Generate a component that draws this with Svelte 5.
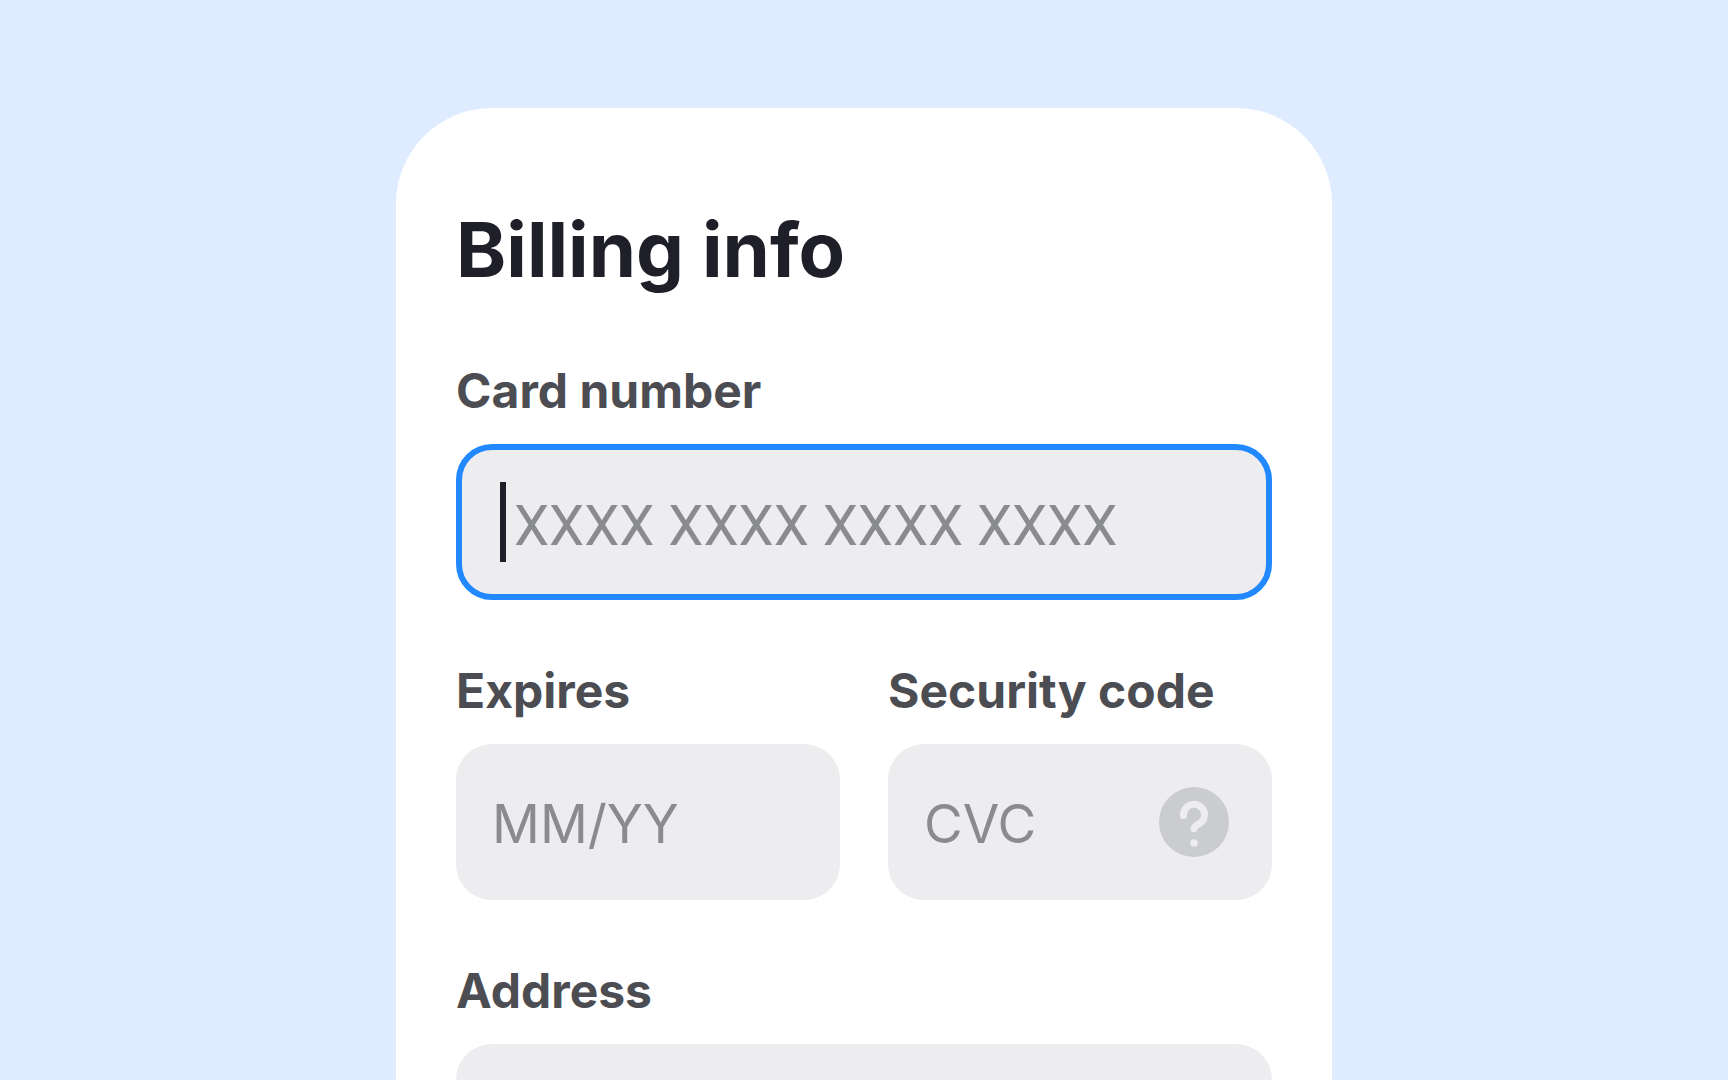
<script>
    let cardNumber = '';
    let expires = '';
    let securityCode = '';
    let address = '';
</script>

<style>
    :global(body) {
        background-color: #dfecff;
    }

    .page {
        box-sizing: border-box;
        height: 100vh;
        padding: 108px 24px 0;
        overflow: hidden;
        font-family: Inter, "Liberation Sans", sans-serif;
    }

    .card {
        box-sizing: border-box;
        max-width: 936px;
        margin: 0 auto;
        padding: 96px 60px;
        border-radius: 96px;
        background-color: #fff;
    }

    h1 {
        margin: 0 0 66px;
        font-size: 76px;
        line-height: 90px;
        font-weight: 700;
        color: #1f1f29;
    }

    form {
        display: flex;
        flex-direction: column;
        gap: 60px;
    }

    .row {
        display: grid;
        grid-template-columns: 1fr 1fr;
        gap: 48px;
    }

    .field {
        min-width: 0;
    }

    label {
        display: block;
        margin-bottom: 22px;
        font-size: 48px;
        line-height: 62px;
        font-weight: 700;
        color: #4c4d53;
    }

    .control {
        box-sizing: border-box;
        display: flex;
        align-items: center;
        height: 156px;
        padding: 0 37px 0 30px;
        border: 6px solid #ededef;
        border-radius: 36px;
        background-color: #ededef;
    }

    .control.active {
        padding-left: 38px;
        border-color: #2288ff;
    }

    .caret {
        flex: none;
        width: 6px;
        height: 80px;
        margin-right: 8px;
        background-color: #1f1f29;
    }

    input {
        flex: 1;
        min-width: 0;
        padding: 4px 0 0;
        border: none;
        outline: none;
        background: none;
        font-family: inherit;
        font-size: 53px;
        line-height: 72px;
        font-weight: 400;
        color: #1f1f29;
    }

    input::placeholder {
        color: #8a8b8e;
        opacity: 1;
    }

    #card-number {
        padding-top: 8px;
        font-family: Roboto, sans-serif;
        font-size: 56px;
    }

    .help {
        flex: none;
        padding: 0;
        border: none;
        background: none;
        cursor: pointer;
    }

    .help svg {
        display: block;
    }
</style>

<main class="page">
    <div class="card">
        <h1>Billing info</h1>
        <form on:submit|preventDefault>
            <div class="field">
                <label for="card-number">Card number</label>
                <div class="control active">
                    <span class="caret"></span>
                    <input id="card-number" type="text" inputmode="numeric" bind:value={cardNumber} placeholder="XXXX XXXX XXXX XXXX" />
                </div>
            </div>
            <div class="row">
                <div class="field">
                    <label for="expires">Expires</label>
                    <div class="control">
                        <input id="expires" type="text" bind:value={expires} placeholder="MM/YY" />
                    </div>
                </div>
                <div class="field">
                    <label for="security-code">Security code</label>
                    <div class="control">
                        <input id="security-code" type="text" bind:value={securityCode} placeholder="CVC" />
                        <button type="button" class="help" aria-label="What is the security code?">
                            <svg width="70" height="70" viewBox="0 0 70 70" fill="none">
                                <circle cx="35" cy="35" r="35" fill="#cbccce" />
                                <path d="M24.5 28.5V28a10.5 10.5 0 1 1 14.2 9.6c-2.2 1-3.7 2.3-3.7 4.2" stroke="#ededef" stroke-width="7" stroke-linecap="round" stroke-linejoin="round" />
                                <circle cx="35" cy="56" r="3.8" fill="#ededef" />
                            </svg>
                        </button>
                    </div>
                </div>
            </div>
            <div class="field">
                <label for="address">Address</label>
                <div class="control">
                    <input id="address" type="text" bind:value={address} />
                </div>
            </div>
        </form>
    </div>
</main>
